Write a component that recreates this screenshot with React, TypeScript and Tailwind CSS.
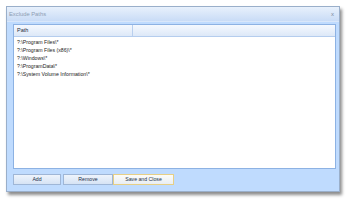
import React from "react";

const font = { fontFamily: '"Liberation Sans", Arial, sans-serif' };

function Btn({ label, w, def }: { label: string; w: string; def?: boolean }) {
  return (
    <div
      className={
        def
          ? `${w} h-[11px] flex items-center justify-center border border-[#e6cf86] bg-gradient-to-b from-[#fcfcf8] to-[#e9eef4] text-[5.2px] text-[#20304a]`
          : `${w} h-[11px] flex items-center justify-center border border-[#9fb6d6] bg-gradient-to-b from-[#eef4fc] to-[#d6e3f4] text-[5.2px] text-[#20304a]`
      }
    >
      {label}
    </div>
  );
}

export default function App() {
  const rows = [
    "?:\\Program Files\\*",
    "?:\\Program Files (x86)\\*",
    "?:\\Windows\\*",
    "?:\\ProgramData\\*",
    "?:\\System Volume Information\\*",
  ];
  return (
    <div className="w-[350px] h-[201px] bg-white pt-[6px] pl-[6px]" style={font}>
      <div className="w-[334px] h-[186px] flex flex-col border border-[#9aafca] bg-[#bfdbfe] shadow-[2px_3px_3px_rgba(0,0,0,0.45)]">
        <div className="h-[15px] shrink-0 flex items-center justify-between pl-[2px] pr-[5px] bg-gradient-to-b from-[#e8f1fc] to-[#c9dcf6] border-b border-[#d9e7fa]">
          <span className="text-[5.8px] text-[#8e9db3]">Exclude Paths</span>
          <span className="text-[6px] text-[#7d8aa0] leading-none">x</span>
        </div>
        <div className="flex-1 flex flex-col pl-[6px] pr-[3px] pt-[2px] pb-[6px]">
          <div className="h-[145px] shrink-0 flex flex-col border border-[#8db2e3] bg-white">
            <div className="h-[12px] shrink-0 flex bg-gradient-to-b from-[#f5f9fe] to-[#dde8f8] border-b border-[#b5cdee]">
              <div className="w-[119px] flex items-center pl-[3px] border-r border-[#b9cfee] text-[5.5px] text-[#1e2b40]">
                Path
              </div>
              <div className="flex-1" />
            </div>
            <div className="flex flex-col pt-[2px] pl-[3px]">
              {rows.map((r) => (
                <div key={r} className="h-[8px] flex items-center text-[5.2px] text-[#1a1a1a] whitespace-pre">
                  {r}
                </div>
              ))}
            </div>
          </div>
          <div className="mt-[5px] flex">
            <Btn label="Add" w="w-[48px]" />
            <div className="w-[2px]" />
            <Btn label="Remove" w="w-[50px]" />
            <Btn label="Save and Close" w="w-[61px]" def />
          </div>
        </div>
      </div>
    </div>
  );
}
